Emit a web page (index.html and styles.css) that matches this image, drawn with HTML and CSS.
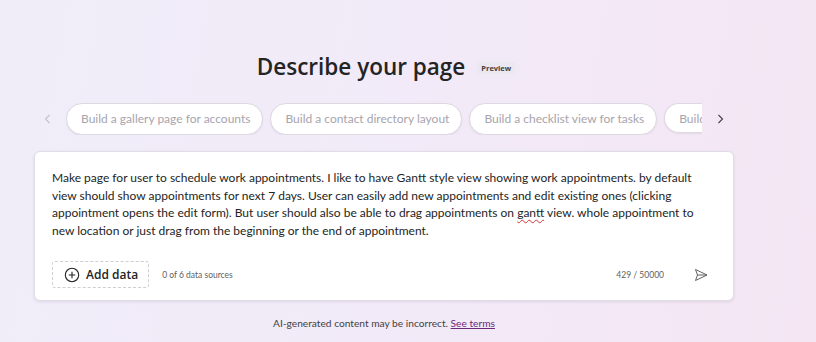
FILE: index.html
```html
<!DOCTYPE html>
<html lang="en">
<head>
  <meta charset="UTF-8">
  <title>Describe your page</title>
  <link rel="stylesheet" href="styles.css">
</head>
<body>
  <main class="page">
    <div class="heading">
      <h1>Describe your page</h1>
      <span class="badge">Preview</span>
    </div>
    <div class="suggestions">
      <button class="nav nav-prev" aria-label="Previous">
        <svg width="12" height="12" viewBox="0 0 12 12"><path d="M7.5 2 L3.5 6 L7.5 10" fill="none" stroke="currentColor" stroke-width="1.1"/></svg>
      </button>
      <div class="chips">
        <span class="chip">Build a gallery page for accounts</span>
        <span class="chip">Build a contact directory layout</span>
        <span class="chip">Build a checklist view for tasks</span>
        <span class="chip chip-cut">Build a</span>
      </div>
      <button class="nav nav-next" aria-label="Next">
        <svg width="12" height="12" viewBox="0 0 12 12"><path d="M4.5 2 L8.5 6 L4.5 10" fill="none" stroke="currentColor" stroke-width="1.1"/></svg>
      </button>
    </div>
    <section class="prompt">
      <p class="prompt-text">Make page for user to schedule work appointments. I like to have Gantt style view showing work appointments. by default view should show appointments for next 7 days. User can easily add new appointments and edit existing ones (clicking appointment opens the edit form). But user should also be able to drag appointments on <span class="typo">gantt</span> view. whole appointment to new location or just drag from the beginning or the end of appointment.</p>
      <div class="prompt-footer">
        <button class="add-data">
          <svg width="16" height="16" viewBox="0 0 16 16"><circle cx="8" cy="8" r="6.7" fill="none" stroke="currentColor" stroke-width="1.1"/><path d="M8 4.8 V11.2 M4.8 8 H11.2" stroke="currentColor" stroke-width="1.1"/></svg>
          Add data
        </button>
        <span class="sources">0 of 6 data sources</span>
        <span class="count">429 / 50000</span>
        <button class="send" aria-label="Send">
          <svg width="16" height="16" viewBox="0 0 16 16"><path d="M2.5 2.5 L14 8 L2.5 13.5 L4.5 8 Z M4.5 8 H14" fill="none" stroke="currentColor" stroke-width="1" stroke-linejoin="round"/></svg>
        </button>
      </div>
    </section>
    <p class="disclaimer">AI-generated content may be incorrect. <a href="#">See terms</a></p>
  </main>
</body>
</html>
```

FILE: styles.css
```css
:root {
  --text: #242424;
  --muted: #616161;
  --chip-text: #a7a4ad;
  --border: #e0dde6;
}
html, body {
  height: 100%;
}
body {
  margin: 0;
  background: linear-gradient(100deg, #f0edf9 0%, #f2eaf8 50%, #f4e6f3 100%);
  font-family: Lato, "Open Sans", Arial, sans-serif;
  color: var(--text);
  overflow: hidden;
}
.page {
  width: 700px;
  margin-left: 34px;
  padding-top: 52px;
  display: flex;
  flex-direction: column;
  align-items: center;
}
.heading {
  display: flex;
  align-items: center;
  gap: 12px;
  margin-left: 4px;
}
.heading h1 {
  margin: 0;
  font-family: "Open Sans", sans-serif;
  font-size: 22.5px;
  font-weight: 600;
  line-height: 30px;
}
.badge {
  font-family: "Open Sans", sans-serif;
  font-size: 7.5px;
  font-weight: 700;
  color: #424242;
  background: #ebe8f0;
  padding: 1px 4px;
  border-radius: 3px;
  margin-top: 2px;
}
.suggestions {
  margin-top: 21px;
  display: flex;
  align-items: center;
  gap: 11px;
}
.nav {
  border: none;
  background: none;
  padding: 0;
  width: 14px;
  height: 14px;
  display: flex;
  align-items: center;
  justify-content: center;
  color: #c5c2ca;
}
.nav-next {
  color: #424242;
}
.chips {
  width: 636px;
  overflow: hidden;
  display: flex;
  gap: 7px;
  white-space: nowrap;
}
.chip {
  flex: none;
  background: #fff;
  border: 1px solid #dcd9e0;
  border-radius: 16px;
  padding: 0 12px 0 14px;
  height: 30px;
  line-height: 30px;
  font-size: 12px;
  color: var(--chip-text);
  box-shadow: 0 1px 2px rgba(60,40,90,0.08);
}
.chip-cut {
  width: 49px;
  box-sizing: border-box;
  padding-right: 0;
  overflow: hidden;
  border-radius: 16px 0 0 16px;
  border-right: none;
}
.prompt {
  margin-top: 16px;
  align-self: stretch;
  background: #fff;
  border: 1px solid var(--border);
  border-radius: 6px;
  box-shadow: 0 1px 3px rgba(60,40,90,0.1);
  padding: 17px 18px 12px 17px;
}
.prompt-text {
  margin: 0;
  font-size: 12px;
  line-height: 17.5px;
  color: #242424;
  min-height: 70px;
}
.typo {
  text-decoration: underline wavy #d13438;
  text-decoration-thickness: 1px;
  text-underline-offset: 2px;
}
.prompt-footer {
  margin-top: 22px;
  display: flex;
  align-items: center;
}
.add-data {
  display: flex;
  align-items: center;
  gap: 6px;
  height: 27px;
  padding: 0 10px 0 11px;
  border: 1px dashed #cfcdd2;
  border-radius: 3px;
  background: #fff;
  font-family: "Open Sans", sans-serif;
  font-size: 12px;
  font-weight: 600;
  color: #242424;
}
.sources {
  margin-left: 13px;
  font-size: 8.5px;
  color: var(--muted);
}
.count {
  margin-left: auto;
  font-size: 8.5px;
  color: var(--muted);
}
.send {
  margin-left: 29px;
  margin-right: 6px;
  border: none;
  background: none;
  padding: 0;
  color: #616161;
  display: flex;
}
.disclaimer {
  margin: 16px 0 0 0;
  font-size: 10.2px;
  color: #424242;
}
.disclaimer a {
  color: #6b2a7a;
}
```
